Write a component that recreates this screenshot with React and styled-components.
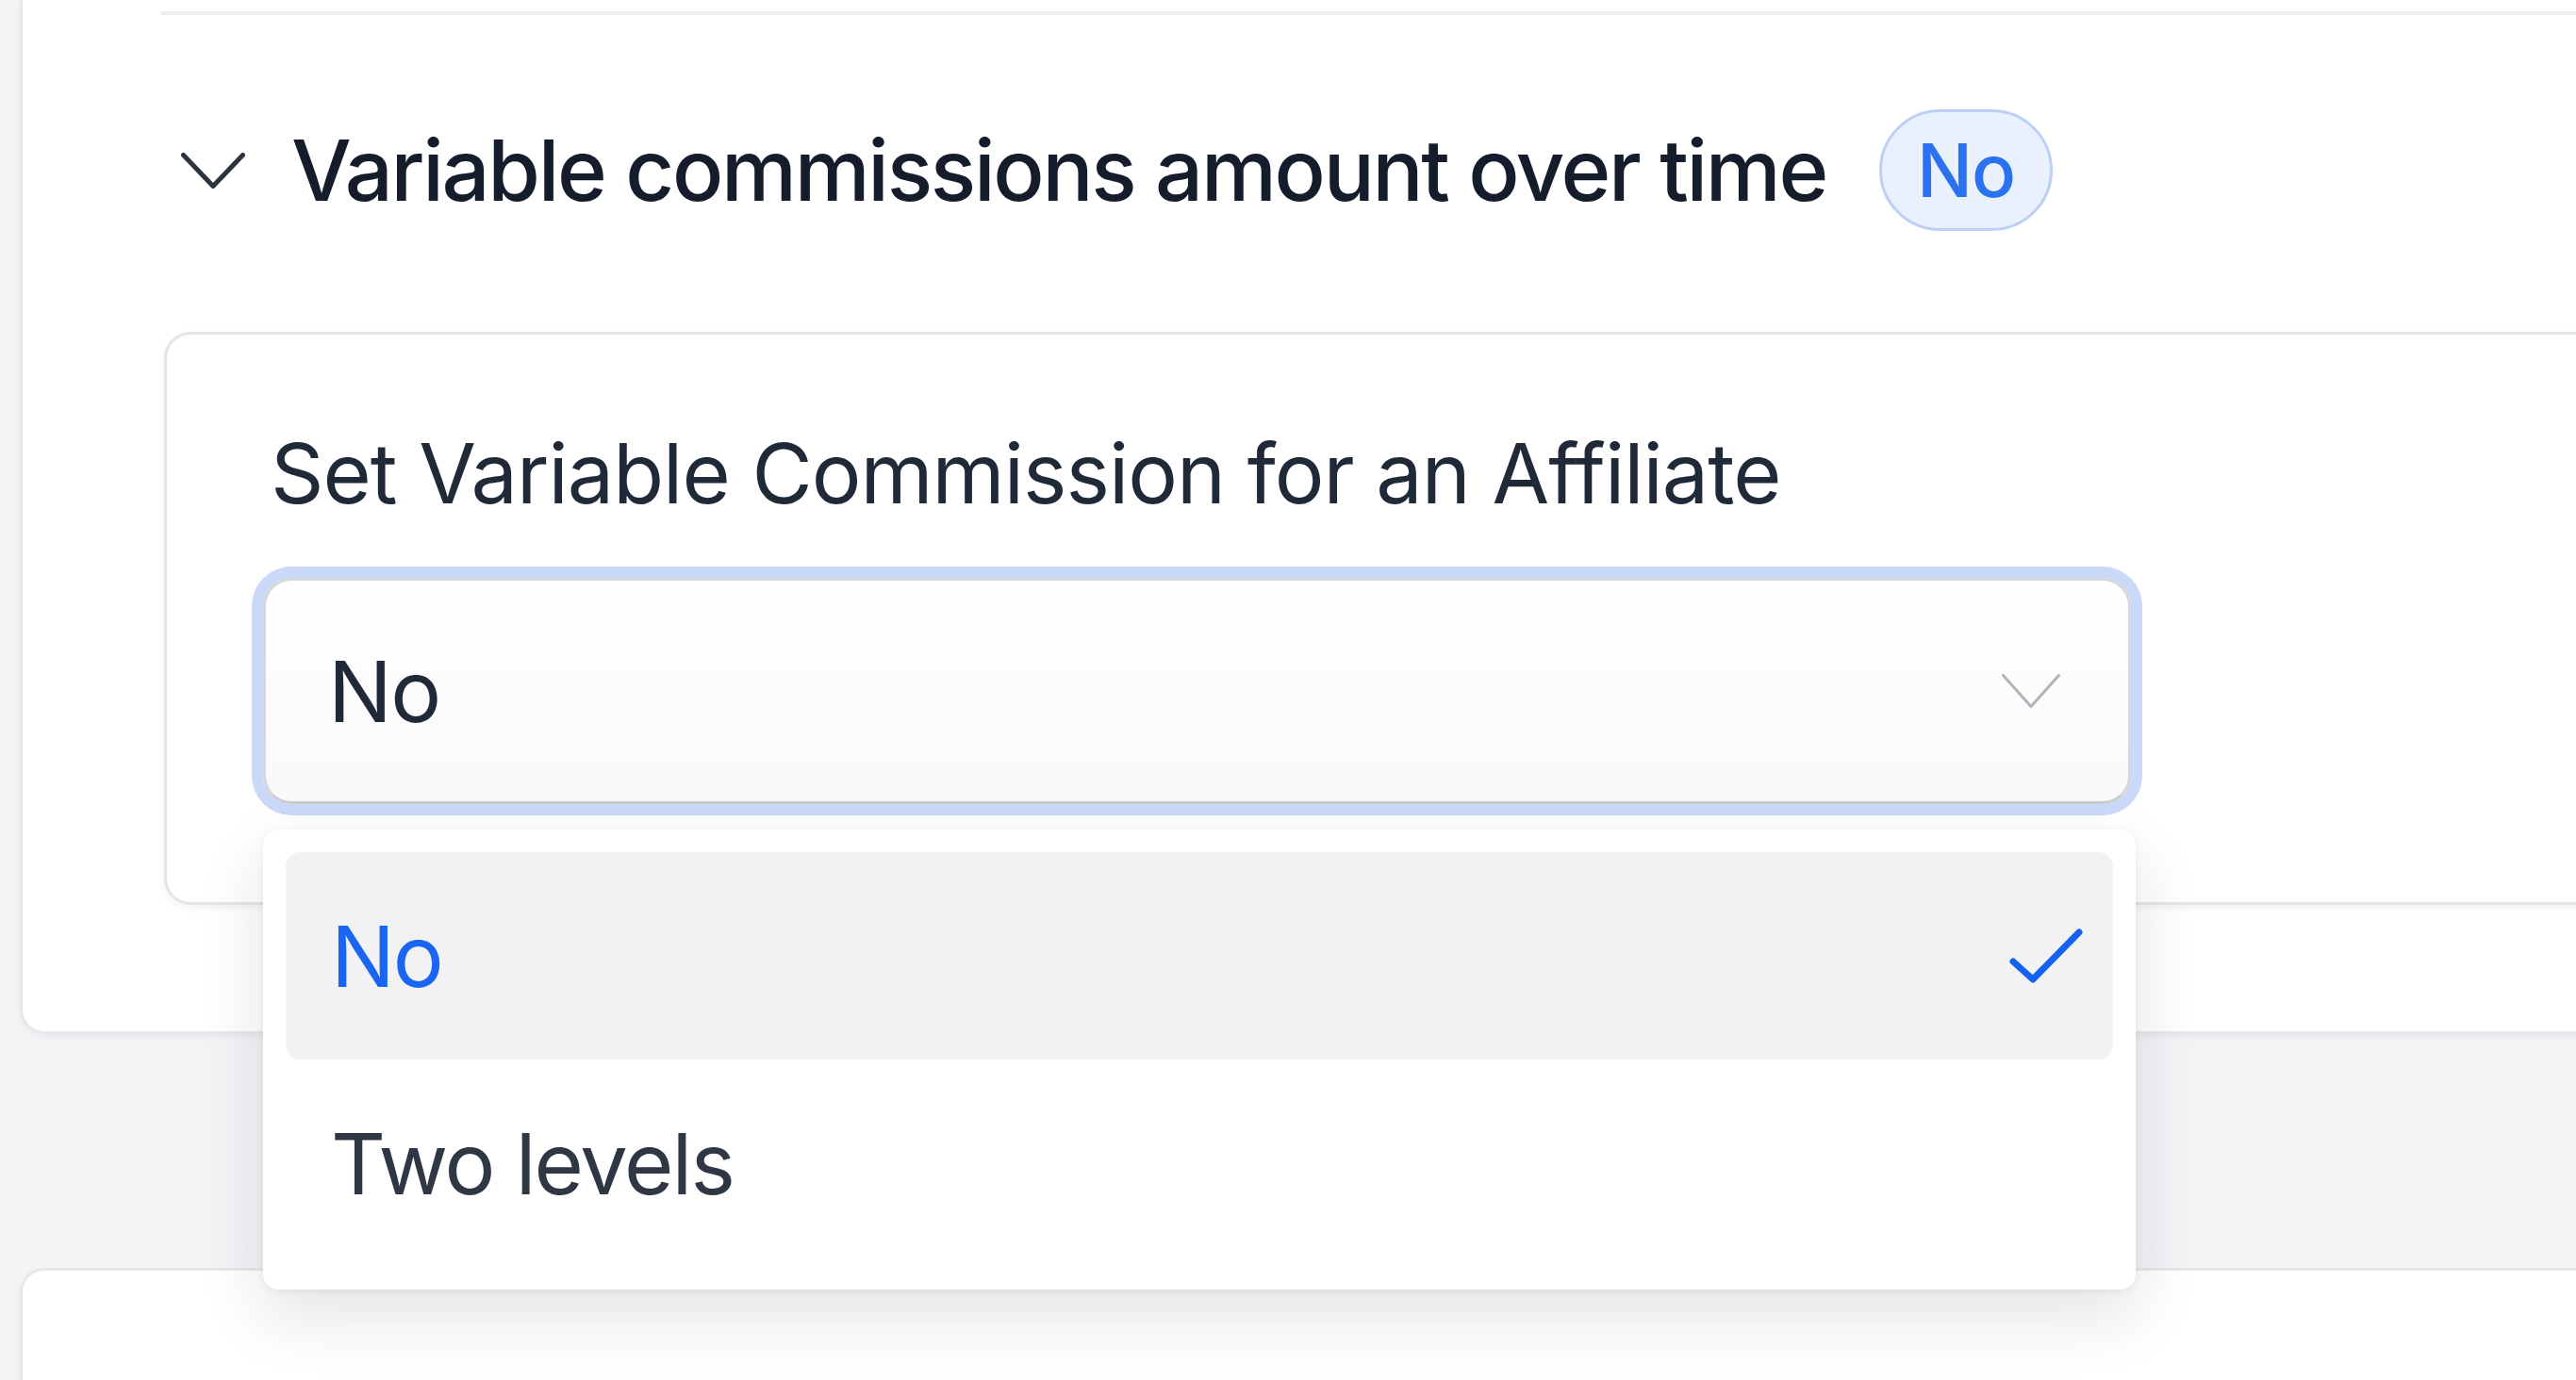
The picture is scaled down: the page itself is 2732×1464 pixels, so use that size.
import React from 'react'
import styled, { createGlobalStyle } from 'styled-components'

const GlobalStyle = createGlobalStyle`
  html, body {
    margin: 0;
    padding: 0;
  }
  body {
    background: #f3f4f6;
    font-family: Inter, "Noto Sans", sans-serif;
    overflow: hidden;
  }
`

const Page = styled.div`
  height: 1464px;
  padding-left: 21px;
  overflow: hidden;
  box-sizing: border-box;
`

const Card = styled.section`
  width: 2800px;
  background: #fff;
  border: 3px solid #e5e7eb;
  border-right: none;
  box-sizing: border-box;
  box-shadow: 0 4px 8px rgba(17, 24, 39, 0.04);
`

const OuterCard = styled(Card)`
  border-top: none;
  border-radius: 0 0 0 26px;
  padding: 12px 0 134px 147px;
  margin-bottom: 248px;
`

const NextCard = styled(Card)`
  height: 200px;
  border-radius: 26px 0 0 0;
`

const Divider = styled.div`
  height: 4px;
  background: #eceef1;
`

const Header = styled.div`
  display: flex;
  align-items: center;
  height: 129px;
  margin-top: 100px;
  padding-left: 21px;
`

const Title = styled.h2`
  margin: 0 0 0 49px;
  font-size: 90px;
  font-weight: 500;
  color: #151c2b;
  letter-spacing: -2.3px;
  white-space: nowrap;
`

const Badge = styled.span`
  display: inline-flex;
  align-items: center;
  justify-content: center;
  height: 129px;
  min-width: 184px;
  box-sizing: border-box;
  margin-left: 56px;
  border: 3px solid #bcd0f3;
  border-radius: 999px;
  background: #eaf1fe;
  color: #2b72f0;
  font-size: 78px;
  font-weight: 500;
  letter-spacing: -1px;
`

const InnerCard = styled.div`
  margin: 107px 0 0 3px;
  border: 3px solid #e4e5e9;
  border-right: none;
  border-radius: 28px 0 0 28px;
  padding: 94px 0 104px 102px;
  background: #fff;
  box-shadow: 0 4px 10px rgba(17, 24, 39, 0.05);
`

const Label = styled.div`
  font-size: 88px;
  line-height: 106px;
  color: #1f2937;
  letter-spacing: -1px;
  padding-left: 8px;
  margin-bottom: 58px;
`

const SelectWrap = styled.div`
  position: relative;
  width: 1981px;
`

const SelectBox = styled.div`
  display: flex;
  align-items: center;
  justify-content: space-between;
  height: 240px;
  box-sizing: border-box;
  padding: 0 72px 0 66px;
  border: 3px solid #d6d7db;
  border-bottom-color: #cbccd0;
  border-radius: 30px;
  background: linear-gradient(#ffffff, #f9f9fa);
  box-shadow: 0 0 0 12px #cad9f8;
  font-size: 90px;
  color: #1f2937;
  letter-spacing: -1.5px;
`

const Menu = styled.ul`
  position: absolute;
  top: calc(100% + 27px);
  left: 0;
  width: 1986px;
  box-sizing: border-box;
  margin: 0;
  padding: 24px;
  list-style: none;
  background: #fff;
  border-radius: 16px;
  box-shadow: 0 28px 70px rgba(15, 23, 42, 0.12), 0 2px 8px rgba(15, 23, 42, 0.05);
  z-index: 5;
`

const Option = styled.li`
  display: flex;
  align-items: center;
  justify-content: space-between;
  height: 220px;
  padding: 0 32px 0 48px;
  border-radius: 16px;
  background: ${p => (p.$active ? '#f2f2f4' : 'transparent')};
  color: ${p => (p.$active ? '#1a66f2' : '#2f3644')};
  font-size: 90px;
  letter-spacing: -2px;
`

const Chevron = ({ width, height, color, stroke }) => (
  <svg width={width} height={height} viewBox={`0 0 ${width} ${height}`} fill="none">
    <polyline
      points={`${stroke / 2},${stroke / 2} ${width / 2},${height - stroke / 2} ${width - stroke / 2},${stroke / 2}`}
      stroke={color}
      strokeWidth={stroke}
      strokeLinecap="round"
      strokeLinejoin="round"
    />
  </svg>
)

const Check = () => (
  <svg width="80" height="60" viewBox="0 0 80 60" fill="none">
    <polyline points="6,36 27,55 76,5" stroke="#1463f0" strokeWidth="7" strokeLinecap="round" strokeLinejoin="round" />
  </svg>
)

const options = [
  { label: 'No', active: true },
  { label: 'Two levels', active: false },
]

export default function App() {
  return (
    <Page>
      <GlobalStyle />
      <OuterCard>
        <Divider />
        <Header>
          <Chevron width={68} height={38} color="#2c3440" stroke={5} />
          <Title>Variable commissions amount over time</Title>
          <Badge>No</Badge>
        </Header>
        <InnerCard>
          <Label>Set Variable Commission for an Affiliate</Label>
          <SelectWrap>
            <SelectBox>
              <span>No</span>
              <Chevron width={62} height={36} color="#b0b3b9" stroke={3} />
            </SelectBox>
            <Menu>
              {options.map(o => (
                <Option key={o.label} $active={o.active}>
                  <span>{o.label}</span>
                  {o.active && <Check />}
                </Option>
              ))}
            </Menu>
          </SelectWrap>
        </InnerCard>
      </OuterCard>
      <NextCard />
    </Page>
  )
}
